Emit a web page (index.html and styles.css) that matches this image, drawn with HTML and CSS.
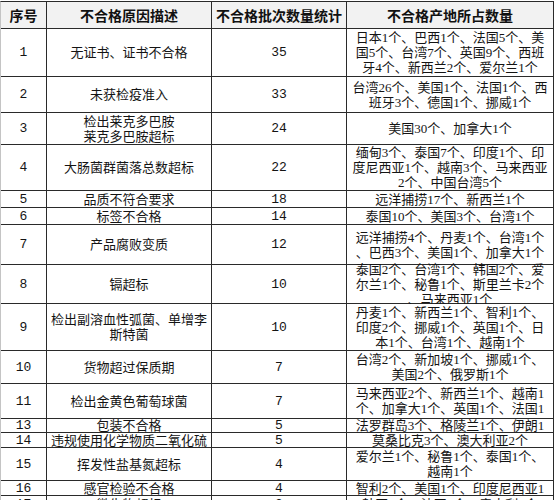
FILE: index.html
```html
<!DOCTYPE html>
<html lang="zh-CN">
<head>
<meta charset="utf-8">
<title>不合格原因统计</title>
<link rel="stylesheet" href="styles.css">
</head>
<body>
<div class="sheet">
  <div class="grid">
    <div class="c hd">序号</div><div class="c hd">不合格原因描述</div><div class="c hd">不合格批次数量统计</div><div class="c hd">不合格产地所占数量</div>

    <div class="c n">1</div><div class="c d">无证书、证书不合格</div><div class="c n">35</div><div class="c o">日本1个、巴西1个、法国5个、美<br>国5个、台湾7个、英国9个、西班<br>牙4个、新西兰2个、爱尔兰1个</div>

    <div class="c n">2</div><div class="c d">未获检疫准入</div><div class="c n">33</div><div class="c o">台湾26个、美国1个、法国1个、西<br>班牙3个、德国1个、挪威1个</div>

    <div class="c n">3</div><div class="c d">检出莱克多巴胺<br>莱克多巴胺超标</div><div class="c n">24</div><div class="c o">美国30个、加拿大1个</div>

    <div class="c n">4</div><div class="c d">大肠菌群菌落总数超标</div><div class="c n">22</div><div class="c o">缅甸3个、泰国7个、印度1个、印<br>度尼西亚1个、越南3个、马来西亚<br>2个、中国台湾5个</div>

    <div class="c n">5</div><div class="c d">品质不符合要求</div><div class="c n">18</div><div class="c o">远洋捕捞17个、新西兰1个</div>

    <div class="c n">6</div><div class="c d">标签不合格</div><div class="c n">14</div><div class="c o">泰国10个、美国3个、台湾1个</div>

    <div class="c n">7</div><div class="c d">产品腐败变质</div><div class="c n">12</div><div class="c o">远洋捕捞4个、丹麦1个、台湾1个<br>、巴西3个、美国1个、加拿大1个</div>

    <div class="c n">8</div><div class="c d">镉超标</div><div class="c n">10</div><div class="c o">泰国2个、台湾1个、韩国2个、爱<br>尔兰1个、秘鲁1个、斯里兰卡2个<br>、马来西亚1个</div>

    <div class="c n">9</div><div class="c d">检出副溶血性弧菌、单增李<br>斯特菌</div><div class="c n">10</div><div class="c o">丹麦1个、新西兰1个、智利1个、<br>印度2个、挪威1个、英国1个、日<br>本1个、台湾1个、越南1个</div>

    <div class="c n">10</div><div class="c d">货物超过保质期</div><div class="c n">7</div><div class="c o">台湾2个、新加坡1个、挪威1个、<br>美国2个、俄罗斯1个</div>

    <div class="c n">11</div><div class="c d">检出金黄色葡萄球菌</div><div class="c n">7</div><div class="c o">马来西亚2个、新西兰1个、越南1<br>个、加拿大1个、英国1个、法国1</div>

    <div class="c n">13</div><div class="c d">包装不合格</div><div class="c n">5</div><div class="c o">法罗群岛3个、格陵兰1个、伊朗1</div>

    <div class="c n">14</div><div class="c d">违规使用化学物质二氧化硫</div><div class="c n">5</div><div class="c o">莫桑比克3个、澳大利亚2个</div>

    <div class="c n">15</div><div class="c d">挥发性盐基氮超标</div><div class="c n">4</div><div class="c o">爱尔兰1个、秘鲁1个、泰国1个、<br>越南1个</div>

    <div class="c n">16</div><div class="c d">感官检验不合格</div><div class="c n">4</div><div class="c o">智利2个、美国1个、印度尼西亚1</div>

    <div class="c n">17</div><div class="c d">微生物超标</div><div class="c n">3</div><div class="c o">韩国1个、法国1个、意大利1个</div>
  </div>
</div>
</body>
</html>
```

FILE: styles.css
```css
html, body {
  margin: 0;
  padding: 0;
  background: #ffffff;
}
body {
  width: 556px;
  height: 500px;
  overflow: hidden;
  font-family: "Noto Sans CJK SC", "Noto Sans", sans-serif;
  color: #141414;
}
.sheet {
  padding-top: 1px;
}
.grid {
  display: grid;
  width: max-content;
  grid-template-columns: 45px 164px 134px 206px;
  grid-template-rows: 26px 47px 35px 31px 45px 16px 16px 39px 38px 46px 32px 34px 13px 14px 32px 14px 16px;
  gap: 1px;
  background: #2a2a2a;
  border: 1px solid #2a2a2a;
  border-left-color: #c4c4c4;
}
.c {
  background: #ffffff;
  display: flex;
  align-items: center;
  justify-content: center;
  text-align: center;
  line-height: 15px;
  white-space: nowrap;
  overflow: visible;
}
.hd {
  background: #f2f2f2;
  font-weight: bold;
  font-size: 14px;
  color: #111111;
}
.n {
  font-family: "Liberation Mono", "DejaVu Sans Mono", monospace;
  font-size: 13px;
}
.d {
  font-family: "Liberation Serif", "Noto Sans CJK SC", serif;
  font-size: 13px;
}
.o {
  font-family: "Liberation Serif", "Noto Sans CJK SC", serif;
  font-size: 13px;
}
```
